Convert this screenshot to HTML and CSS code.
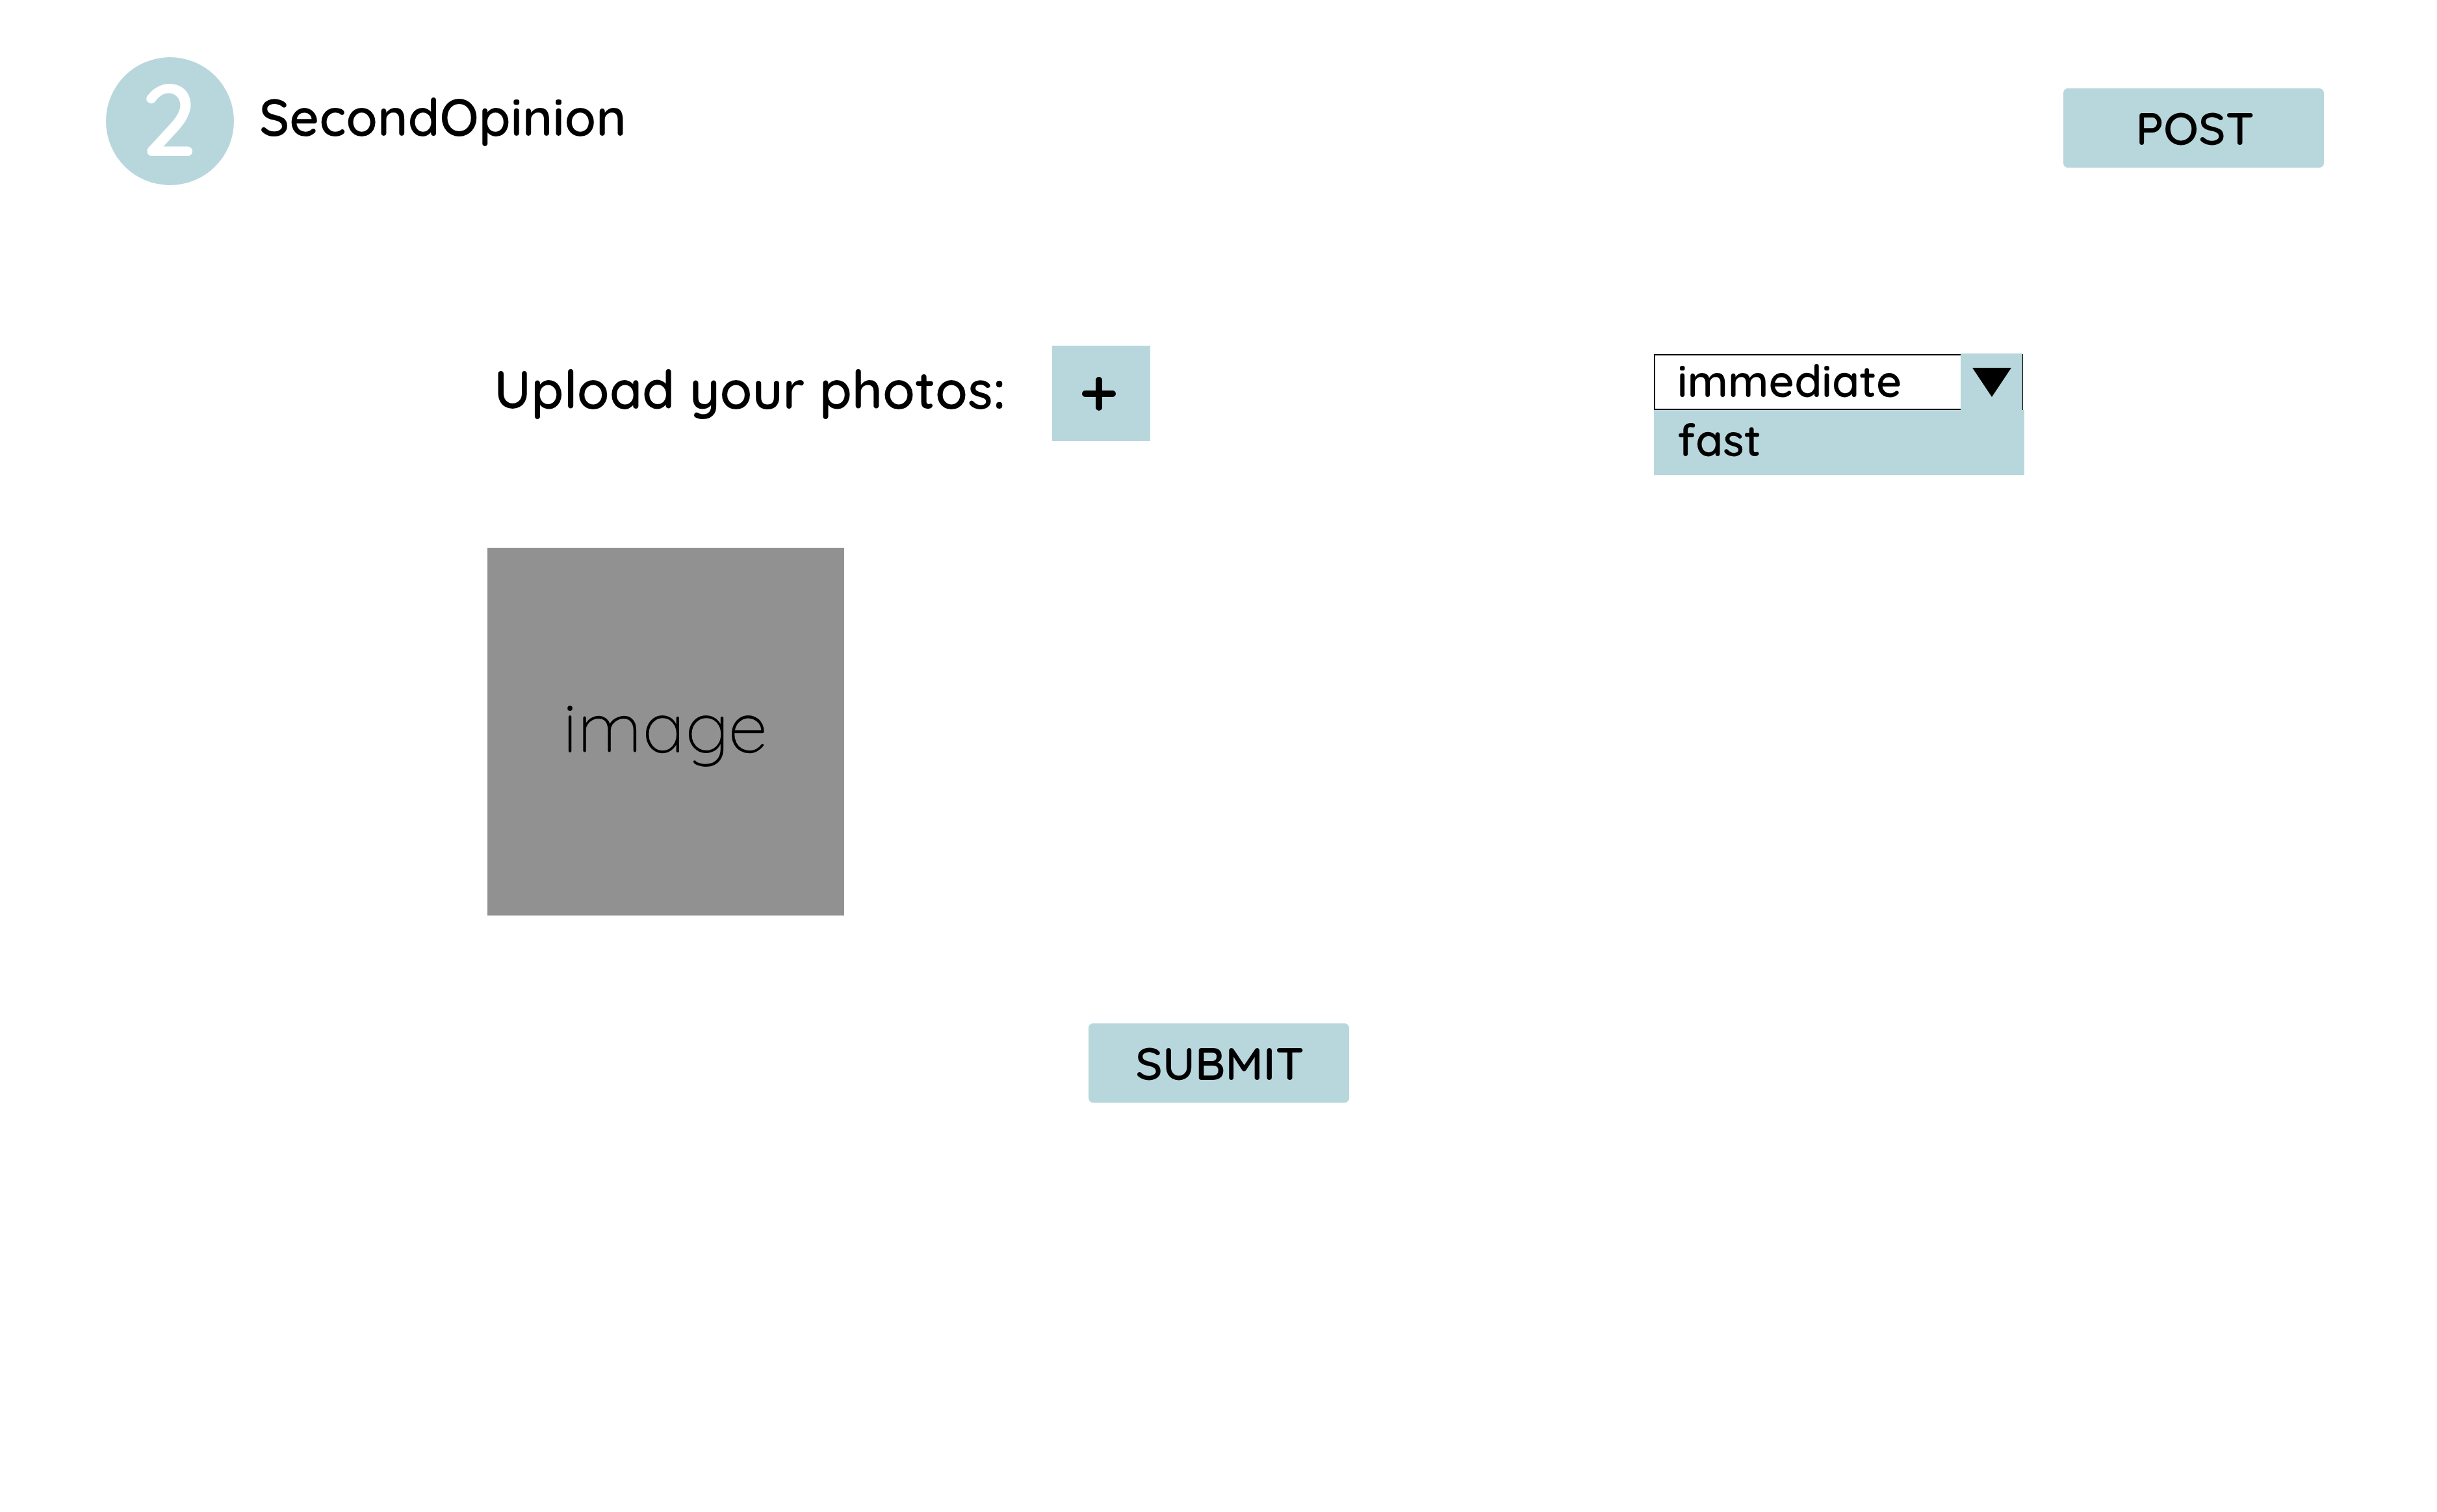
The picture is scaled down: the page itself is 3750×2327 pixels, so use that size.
FILE: index.html
```html
<!DOCTYPE html>
<html lang="en">
<head>
  <meta charset="utf-8">
  <meta name="viewport" content="width=device-width, initial-scale=1">
  <title>SecondOpinion</title>
  <link rel="stylesheet" href="styles.css">
</head>
<body>
  <header class="header">
    <a class="brand" href="#">
      <span class="brand-logo">2</span>
      <span class="brand-name">SecondOpinion</span>
    </a>
    <button class="button" type="button">POST</button>
  </header>

  <main>
    <form class="form">
      <div class="form-columns">
        <section class="photos">
          <div class="upload">
            <label class="upload-label" for="add-photo">Upload your photos:</label>
            <button class="upload-add" id="add-photo" type="button">
              <svg class="plus" viewBox="0 0 52 52" aria-hidden="true">
                <path d="M26 5V47M5 26H47" fill="none" stroke="#000" stroke-width="10" stroke-linecap="round"/>
              </svg>
            </button>
          </div>
          <div class="photo">image</div>
        </section>

        <div class="speed">
          <div class="speed-field">
            <select class="speed-select" aria-label="Response speed">
              <option>immediate</option>
              <option>fast</option>
            </select>
            <span class="speed-arrow">
              <svg class="triangle" viewBox="0 0 60 45" aria-hidden="true">
                <path d="M0 0H60L30 45Z"/>
              </svg>
            </span>
          </div>
          <button class="speed-option" type="button">fast</button>
        </div>
      </div>
      <button class="button" type="submit">SUBMIT</button>
    </form>
  </main>
</body>
</html>
```

FILE: styles.css
```css
* {
  box-sizing: border-box;
}

body {
  margin: 0;
  background: #fff;
  color: #000;
  font-family: Quicksand, Lato, sans-serif;
  font-weight: 600;
}

button,
select {
  margin: 0;
  border: 0;
  padding: 0;
  color: inherit;
  font: inherit;
}

.header {
  display: flex;
  justify-content: space-between;
  align-items: center;
  padding: 88px 174px 0 163px;
}

.brand {
  display: flex;
  align-items: center;
  gap: 39px;
  color: inherit;
  text-decoration: none;
}

.brand-logo {
  width: 197px;
  height: 197px;
  border-radius: 50%;
  padding-right: 2px;
  background: #b8d7dc;
  color: #fff;
  font-size: 156px;
  line-height: 188px;
  text-align: center;
}

.brand-name,
.upload-label {
  padding-bottom: 14px;
  font-size: 79px;
  line-height: 100px;
}

.upload-label {
  font-size: 81px;
}

.button {
  width: 401px;
  height: 122px;
  border-radius: 7px;
  padding-left: 4px;
  background: #b8d7dc;
  font-size: 71px;
  line-height: 122px;
}

.header .button {
  margin-top: 21px;
}

.form {
  display: flex;
  flex-direction: column;
  align-items: center;
  gap: 166px;
  padding: 247px 0 160px;
}

.form-columns {
  display: flex;
  justify-content: space-between;
  align-items: flex-start;
  width: 100%;
  padding: 0 635px 0 20%;
}

.photos {
  display: flex;
  flex-direction: column;
  gap: 164px;
}

.upload {
  display: flex;
  align-items: center;
  gap: 72px;
  padding-left: 10px;
}

.upload-add {
  display: flex;
  justify-content: center;
  align-items: center;
  width: 151px;
  height: 147px;
  padding-right: 8px;
  background: #b8d7dc;
}

.plus {
  width: 52px;
  height: 52px;
}

.photo {
  width: 549px;
  height: 566px;
  padding-right: 2px;
  background: #919191;
  font-size: 110px;
  font-weight: 300;
  line-height: 548px;
  text-align: center;
}

.speed {
  display: flex;
  flex-direction: column;
  width: 570px;
  padding-top: 13px;
  font-size: 68px;
}

.speed-field {
  position: relative;
  display: flex;
  margin-right: 2px;
}

.speed-select {
  width: 100%;
  height: 86px;
  border: 2px solid #000;
  border-radius: 0;
  padding: 0 0 4px 34px;
  background: #fff;
  line-height: 78px;
  appearance: none;
}

.speed-arrow {
  position: absolute;
  top: -1px;
  right: 1px;
  bottom: 0;
  display: flex;
  justify-content: center;
  align-items: center;
  width: 95px;
  padding-top: 2px;
  background: #b8d7dc;
  pointer-events: none;
}

.triangle {
  width: 60px;
  height: 45px;
}

.speed-option {
  height: 100px;
  padding: 0 0 8px 36px;
  background: #b8d7dc;
  line-height: 92px;
  text-align: left;
}
```
